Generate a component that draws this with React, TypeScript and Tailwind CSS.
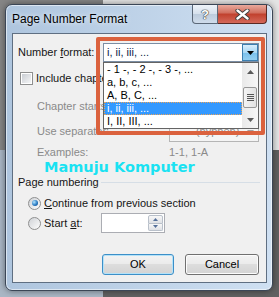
const formats = ["- 1 -, - 2 -, - 3 -, ...", "a, b, c, ...", "A, B, C, ...", "i, ii, iii, ...", "I, II, III, ..."];

const Arrow = ({ color = "#000", up = false }: { color?: string; up?: boolean }) => (
  <svg width="7" height="4" viewBox="0 0 7 4">
    <path d={up ? "M0 4h7L3.5 0z" : "M0 0h7L3.5 4z"} fill={color} />
  </svg>
);

const SmallArrow = ({ up = false }: { up?: boolean }) => (
  <svg width="5" height="3" viewBox="0 0 5 3">
    <path d={up ? "M0 3h5L2.5 0z" : "M0 0h5L2.5 3z"} fill="#55709a" />
  </svg>
);

const Radio = ({ checked }: { checked?: boolean }) => (
  <span className="flex h-[13px] w-[13px] items-center justify-center rounded-full border border-[#8e8f8f] bg-[linear-gradient(135deg,#cfd2d6,#fdfdfd)]">
    {checked && (
      <span className="h-[6px] w-[6px] rounded-full bg-[radial-gradient(circle_at_35%_35%,#b4e6ff,#2a7cc4_55%,#0e3f7c)]" />
    )}
  </span>
);

const Scrollbar = () => (
  <div className="flex h-full w-[16px] flex-col bg-[linear-gradient(to_right,#e9e9e9,#f7f7f7)]">
    <div className="flex h-[17px] items-center justify-center">
      <Arrow color="#5a5a5a" up />
    </div>
    <div className="h-[7px]" />
    <div className="mx-[1px] flex h-[21px] flex-col items-center justify-center gap-[1px] rounded-[2px] border border-[#979797] bg-[linear-gradient(to_right,#f4f4f4,#e2e2e2)]">
      <span className="h-px w-[7px] bg-[#555]" />
      <span className="h-px w-[7px] bg-[#555]" />
      <span className="h-px w-[7px] bg-[#555]" />
      <span className="h-px w-[7px] bg-[#555]" />
    </div>
    <div className="flex-1" />
    <div className="flex h-[17px] items-center justify-center">
      <Arrow color="#5a5a5a" />
    </div>
  </div>
);

export default function App() {
  return (
    <div className="h-[297px] w-[279px] overflow-hidden pl-[5px] pt-[4px] font-['Liberation_Sans',Arial,sans-serif] [background:linear-gradient(to_right,#858585_103px,#e4e4e4_103px)_top/100%_150px_no-repeat,linear-gradient(to_right,#a9b6c4_103px,#616161_103px)_bottom/100%_147px_no-repeat]">
      <div className="h-[287px] w-[268px] rounded-[7px] border border-[#3b4656] bg-[linear-gradient(to_right,#aec5de,#cfe0f2)] shadow-[0_0_6px_rgba(0,0,0,0.45),inset_0_0_0_1px_rgba(255,255,255,0.55)]">
        {/* Title bar */}
        <div className="flex h-[28px] items-start">
          <div className="pl-[6px] pt-[7px] text-[12px] leading-[14px] text-black [text-shadow:0_0_5px_#fff]">
            Page Number Format
          </div>
          <div className="ml-auto mr-[5px] flex h-[19px]">
            <div className="flex w-[26px] items-center justify-center rounded-bl-[4px] border border-t-0 border-[#5b6878] bg-[linear-gradient(#eef3f9,#d5e0ec_50%,#bccbdc_50%,#cfdceb)] text-[13px] font-bold leading-none text-white [text-shadow:0_0_1px_#333,0_0_1px_#333,0_0_1px_#333]">
              ?
            </div>
            <div className="flex w-[49px] items-center justify-center rounded-br-[4px] border border-l-0 border-t-0 border-[#5a2a24] bg-[linear-gradient(#e9a99c,#d06d5d_45%,#c1402d_50%,#d4695a)]">
              <svg width="15" height="11" viewBox="0 0 15 11">
                <path d="M2.5 1.5L12.5 9.5M12.5 1.5L2.5 9.5" stroke="#3a3a3a" strokeWidth="4.2" strokeLinecap="round" />
                <path d="M2.5 1.5L12.5 9.5M12.5 1.5L2.5 9.5" stroke="#fff" strokeWidth="2.4" strokeLinecap="round" />
              </svg>
            </div>
          </div>
        </div>

        {/* Client area */}
        <div className="relative ml-[6px] h-[250px] w-[255px] border border-[#5f6f82] bg-[#f0f0f0] text-[11px] text-[#151515]">
          <div className="flex flex-col pt-[9px]">
            {/* Number format */}
            <div className="flex h-[19px] items-center">
              <span className="w-[90px] pl-[5px]">
                Number <u>f</u>ormat:
              </span>
              <div className="flex h-[19px] w-[156px] border border-[#7b8ea4] bg-white">
                <span className="flex-1 pl-[3px] leading-[17px] text-[#0e1c48]">i, ii, iii, ...</span>
                <div className="flex w-[16px] items-center justify-center border border-[#3c7fb1] bg-[linear-gradient(#d9eefc,#a9d8f5_50%,#78c0ec_50%,#93cef1)]">
                  <Arrow />
                </div>
              </div>
            </div>

            {/* Include chapter number (runs under the open list) */}
            <div className="mt-[10px] flex h-[13px] items-center gap-[3px] pl-[7px]">
              <span className="flex h-[13px] w-[13px] items-center justify-center border border-[#8e8f8f] bg-white">
                <span className="h-[9px] w-[9px] bg-[linear-gradient(135deg,#c9cdd3,#f5f6f7)]" />
              </span>
              <span className="w-[67px] overflow-hidden whitespace-nowrap">Include chapter number</span>
            </div>

            {/* Chapter starts */}
            <div className="mt-[11px] flex h-[21px] items-center text-[#8a8a8a]">
              <span className="ml-[24px] w-[66px] overflow-hidden whitespace-nowrap">Chapter starts with style:</span>
            </div>

            {/* Separator */}
            <div className="mt-[4px] flex h-[21px] items-center text-[#8a8a8a]">
              <span className="w-[156px] pl-[24px]">Use separator:</span>
              <div className="flex h-[21px] w-[90px] border border-[#b5b5b5] bg-[#f4f4f4]">
                <span className="flex-1 pl-[10px] leading-[19px] text-[#8a8a8a]">-&nbsp;&nbsp;&nbsp;&nbsp;(hyphen)</span>
                <div className="flex w-[16px] items-center justify-center">
                  <Arrow color="#a0a0a0" />
                </div>
              </div>
            </div>

            {/* Examples */}
            <div className="flex h-[20px] items-center text-[#8a8a8a]">
              <span className="w-[156px] pl-[24px]">Examples:</span>
              <span>1-1, 1-A</span>
            </div>

            {/* Page numbering */}
            <div className="mt-[12px] flex h-[16px] items-center pl-[5px] pr-[6px]">
              <span>Page numbering</span>
              <span className="ml-[2px] h-px flex-1 bg-[#d6dee6]" />
            </div>

            <div className="mt-[5px] flex h-[16px] items-center gap-[3px] pl-[15px]">
              <Radio checked />
              <span>
                <u>C</u>ontinue from previous section
              </span>
            </div>

            <div className="mt-[2px] flex h-[20px] items-center gap-[3px] pl-[15px]">
              <Radio />
              <span className="w-[54px]">
                Start <u>a</u>t:
              </span>
              <div className="flex h-[20px] w-[64px] border border-[#abadb3] bg-white">
                <div className="flex-1" />
                <div className="flex w-[16px] flex-col py-px pr-px">
                  <div className="flex flex-1 items-center justify-center rounded-t-[2px] border border-[#b9c0ca] bg-[linear-gradient(#f8f8f8,#dfe1e5)]">
                    <SmallArrow up />
                  </div>
                  <div className="flex flex-1 items-center justify-center rounded-b-[2px] border border-t-0 border-[#b9c0ca] bg-[linear-gradient(#f8f8f8,#dfe1e5)]">
                    <SmallArrow />
                  </div>
                </div>
              </div>
            </div>

            {/* Buttons */}
            <div className="mt-[21px] flex justify-end gap-[11px] pr-[7px]">
              <button className="h-[21px] w-[72px] rounded-[3px] border border-[#3c8fc8] bg-[linear-gradient(#f3f3f3,#ebebeb_45%,#dddddd_50%,#d3d3d3)] text-[11px] text-black shadow-[inset_0_0_0_1px_#b4e2f8]">
                OK
              </button>
              <button className="h-[21px] w-[74px] rounded-[3px] border border-[#707070] bg-[linear-gradient(#f3f3f3,#ebebeb_45%,#dddddd_50%,#d3d3d3)] text-[11px] text-black shadow-[inset_0_0_0_1px_#fcfcfc]">
                Cancel
              </button>
            </div>
          </div>

          {/* Open drop-down list */}
          <div className="absolute left-[90px] top-[28px] flex h-[67px] w-[156px] border border-[#646464] bg-white">
            <div className="flex-1">
              {formats.map((f, i) =>
                i === 3 ? (
                  <div
                    key={f}
                    className="h-[13px] border border-dotted border-[#e9a45a] bg-[#3399ff] pl-[2px] leading-[11px] text-white"
                  >
                    {f}
                  </div>
                ) : (
                  <div key={f} className="h-[13px] pl-[3px] leading-[13px] text-black">
                    {f}
                  </div>
                )
              )}
            </div>
            <Scrollbar />
          </div>

          {/* Highlight box */}
          <div className="absolute left-[83px] top-[3px] h-[98px] w-[169px] rounded-[2px] border-[4px] border-[#db623e]" />

          {/* Watermark */}
          <div className="absolute left-[31px] top-[124px] font-['DejaVu_Sans',Verdana,sans-serif] text-[14.5px] font-bold leading-[18px] text-[#1ae2f2]">
            Mamuju Komputer
          </div>
        </div>
      </div>
    </div>
  );
}
